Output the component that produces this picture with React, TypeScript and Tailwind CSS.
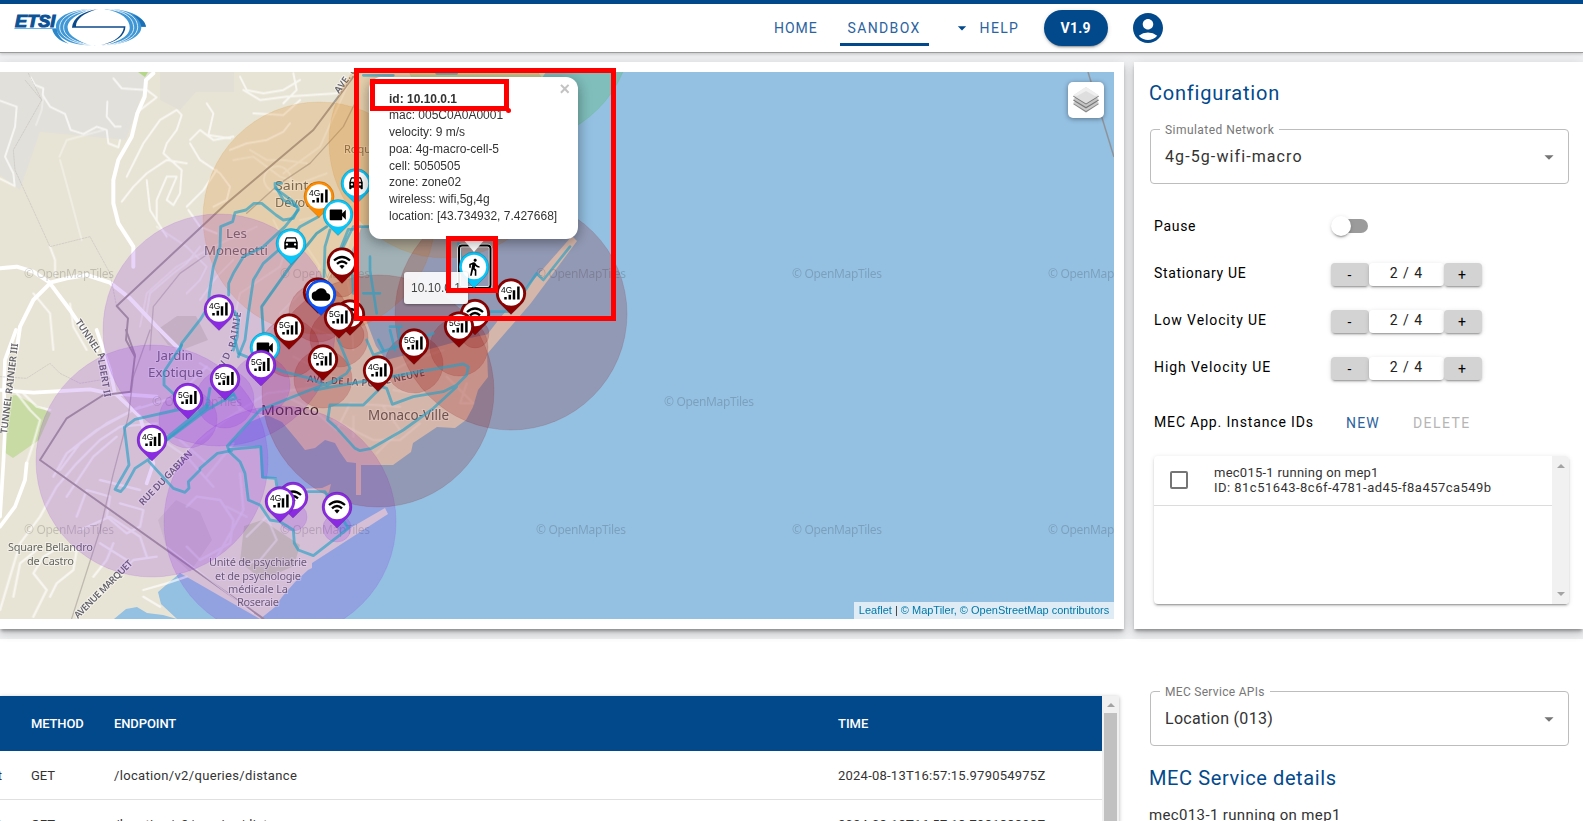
import React from "react";
import {
  MdAccountCircle,
  MdArrowDropDown,
  MdCloud,
  MdDirectionsCar,
  MdDirectionsWalk,
  MdVideocam,
  MdWifi,
} from "react-icons/md";

type Kind = "4G" | "5G" | "wifi" | "car" | "cam" | "cloud" | "walk" | "none";

const PURPLE = "#8a2be2";
const RED = "#8b0000";
const ORANGE = "#ff8c00";
const ORANGE_AREA = "#d87a0c";
const CYAN = "#0cc5f7";
const BLUE = "#0a50f5";

const cells: [number, number, number, string][] = [
  [516, 27, 116, "#2fb923"],
  [445, 142, 116, ORANGE_AREA],
  [319, 218, 116, ORANGE_AREA],
  [219, 330, 116, PURPLE],
  [152, 461, 116, PURPLE],
  [280, 522, 116, PURPLE],
  [378, 391, 116, RED],
  [511, 314, 116, RED],
  [188, 419, 29, PURPLE],
  [225, 399, 29, PURPLE],
  [261, 385, 29, PURPLE],
  [290, 348, 29, RED],
  [323, 379, 29, RED],
  [339, 338, 29, RED],
  [414, 364, 29, RED],
  [459, 347, 29, RED],
  [318, 313, 29, RED],
  [342, 283, 14, RED],
  [350, 335, 14, RED],
  [475, 334, 14, RED],
  [293, 517, 14, PURPLE],
  [337, 528, 14, PURPLE],
];

const pins: [number, number, Kind, string][] = [
  [356, 204.5, "car", CYAN],
  [319, 217.5, "4G", ORANGE],
  [338, 235.5, "cam", CYAN],
  [342, 283.5, "wifi", RED],
  [291, 264.5, "car", CYAN],
  [318, 313.5, "none", RED],
  [321, 315.5, "cloud", BLUE],
  [219, 330.5, "4G", PURPLE],
  [511, 314.5, "4G", RED],
  [475, 335, "wifi", RED],
  [350, 335.5, "wifi", RED],
  [339, 338.5, "5G", RED],
  [459, 347.5, "5G", RED],
  [289, 349.5, "5G", RED],
  [414, 364.5, "5G", RED],
  [265, 368.5, "cam", CYAN],
  [323, 380.5, "5G", RED],
  [261, 386, "5G", PURPLE],
  [378, 391.5, "4G", RED],
  [225, 400, "5G", PURPLE],
  [188, 419, "5G", PURPLE],
  [152, 461, "4G", PURPLE],
  [293, 518, "wifi", PURPLE],
  [280, 522.5, "4G", PURPLE],
  [337, 528, "wifi", PURPLE],
];

const watermarks: [number, number][] = [
  [24, 277.5], [280, 277.5], [536, 277.5], [792, 277.5], [1048, 277.5],
  [152, 405.5], [664, 405.5],
  [24, 533.5], [280, 533.5], [536, 533.5], [792, 533.5], [1048, 533.5],
];

function Pin({ x, y, kind, color }: { x: number; y: number; kind: Kind; color: string }) {
  const cy = y - 21;
  return (
    <g>
      <path
        d={`M${x} ${y}L${x - 10.6} ${cy + 10.6}A15 15 0 1 1 ${x + 10.6} ${cy + 10.6}Z`}
        fill={color}
        stroke="#000"
        strokeOpacity={0.3}
        strokeWidth={0.6}
      />
      <circle cx={x} cy={cy} r={12.2} fill="#fff" />
      {(kind === "4G" || kind === "5G") && (
        <g>
          <text x={x - 10} y={cy - 0.5} fontSize={8.4} fontFamily="Liberation Sans, sans-serif" fill="#000">{kind}</text>
          <path d={`M${x - 5.5} ${cy + 6}v-2.4M${x - 1.2} ${cy + 6}v-4.8M${x + 3} ${cy + 6}v-9.2M${x + 7.4} ${cy + 6}v-13`} stroke="#000" strokeWidth={2.5} />
        </g>
      )}
      {kind === "wifi" && (
        <g fill="none" stroke="#000" strokeWidth={2.3}>
          <path d={`M${x - 8} ${cy - 2}Q${x} ${cy - 9} ${x + 8} ${cy - 2}M${x - 5} ${cy + 1.4}Q${x} ${cy - 3.4} ${x + 5} ${cy + 1.4}`} />
          <path d={`M${x - 2.6} ${cy + 3.6}Q${x} ${cy + 1.6} ${x + 2.6} ${cy + 3.6}L${x} ${cy + 6.6}Z`} fill="#000" stroke="none" />
        </g>
      )}
      {kind === "car" && <MdDirectionsCar x={x - 9} y={cy - 10} size={18} color="#000" />}
      {kind === "cam" && <MdVideocam x={x - 11} y={cy - 10.5} size={21.5} color="#000" />}
      {kind === "cloud" && <MdCloud x={x - 9.5} y={cy - 9.5} size={19} color="#000" />}
      {kind === "walk" && <MdDirectionsWalk x={x - 9.5} y={cy - 9.5} size={19} color="#000" />}
    </g>
  );
}

function MapCanvas() {
  return (
    <svg viewBox="0 72 1114 547" className="block h-[547px] w-[1114px]" fontFamily="Noto Sans, sans-serif">
      <rect x={0} y={72} width={1114} height={547} fill="#94c0e2" />
      <path d="M1088 72L1114 157" stroke="#8f9399" strokeWidth={1.5} />
      <path
        fill="#e8e4d5"
        d="M0 72H546L520 110L500 170L470 215L460 236L400 222L362 226L352 250L357 294L366 320L376 346L386 360L430 349L470 338L489 334L480 344L500 318L572 236L577 241L531 303L487 354L488 377L478 390L473 407L466 420L455 428L437 427L413 443L411 452L393 465L361 465V495H356V463L347 462L340 452L335 443L325 440L315 448L305 450L297 440L282 422L267 415L250 422L239 435L230 443L229 447L260 446L261 478L277 478L278 490L322 488L331 484L329 492L325 496L340 534L385 508L388 514L312 563L312 568L308 570L295 582L282 597L275 607L260 619L180 573L158 592L161 604L177 619L163 615L147 613L137 607L126 609L114 619H0Z"
      />
      <path d="M0 72H150L126 140L40 132L20 190L0 175Z" fill="#e2e0da" />
      <path d="M160 72H234V92H196L180 110L160 100Z" fill="#dfddd6" opacity={0.7} />
      <path d="M10 396L16 395L51 413L39 440L13 458L4 452Z" fill="#c9dba4" />
      <path d="M138 72L148 72L145 77Z" fill="#b5d78a" />
      <path d="M157 330L177 316L196 316L208 340L182 350L168 345Z" fill="#d2d0bf" />
      <path d="M244 526L262 520L300 545L294 566L262 580L240 562Z" fill="#cdd1b2" />
      <path d="M158 520L176 500L200 512L212 540L190 572L168 552Z" fill="#dbd6c8" />

      <g transform="translate(0 60) scale(.33333)" fill="none" stroke="#fff" strokeLinecap="round" strokeLinejoin="round">
        <g strokeWidth={12}>
          <path d="M460 40L438 60L434 110L412 160L395 230L355 300L340 360V430L355 490L400 560L400 620" />
          <path d="M0 625L50 620L100 635L150 668L200 655L260 645L330 668L390 715L470 800L540 870" />
          <path d="M150 670L100 720L60 800L50 870M150 670L210 750L250 810L290 870" />
        </g>
        <g strokeWidth={6} opacity={0.7}>
          <path d="M0 122L50 140L45 200L15 290L40 340L44 378L0 356" />
          <path d="M92 52L105 75L130 85L128 105L150 140L195 162L212 210L250 222L290 200L320 210L325 250L355 262L360 240" />
          <path d="M340 55L365 85L440 90L470 112L420 150M322 125L320 170L345 200L362 200" />
          <path d="M108 195L125 150L130 105M178 290L200 240L310 210M180 300L210 410L245 540" opacity={0.5} />
          <path d="M380 350L400 310L430 250L480 180L530 150L545 165L530 210L500 250L490 280L545 330L540 400L520 435L500 420L530 350L500 350L470 420L470 480" />
          <path d="M365 425L400 380L440 340L500 300L560 310M440 360L450 450L500 530M570 240L600 210L640 240L700 230M570 250L600 300L660 340L690 380L680 420L640 440" />
          <path d="M560 440L610 390L650 330M565 450L600 500L650 520M620 130L640 160L625 225L690 235M720 50L740 90L790 100L850 90L900 60" />
          <path d="M730 90L780 120L860 110L1010 100M690 270L740 250L800 240L850 215L870 190M760 160L850 165L900 120M880 40L890 90L850 130" />
          <path d="M700 300L760 290L840 350L900 370L980 340M750 270L800 300L850 300L920 310M860 330A40 38 0 1 0 862 332M1050 60L1000 170L960 260L850 340" opacity={0.6} />
          <path d="M150 560L165 600L165 650M100 700L150 760L160 870M210 730L220 800L260 870" />
          <path d="M470 500L560 560L620 620L600 660L560 700M600 560L560 610L520 640L450 700L440 760M700 600L650 650L600 720" opacity={0.6} />
          <path d="M820 480L860 560L840 620L720 700L700 790M900 480L1000 460L1060 430M920 560L960 620L920 680L840 760M420 800L440 700L530 620L640 560L770 500" opacity={0.5} />
          <path d="M1060 500L1030 600L1050 700L1060 870M760 860L820 800L900 790L1000 830" opacity={0.5} />
        </g>
        <g strokeWidth={1.5} stroke="#bdb9b9" strokeDasharray="5 4">
          <path d="M85 40L125 120L40 270L45 330L150 560L270 530L330 640L350 740M125 120L75 60" />
        </g>
        <g stroke="#a49c96" strokeWidth={6}>
          <path d="M1060 50L1000 130L940 210L680 430L350 738L384 775L378 840L405 890" />
          <path d="M1075 110L1030 200L930 310L840 370L740 460" strokeWidth={4} opacity={0.7} />
          <path d="M640 570L540 640L460 740L450 870" strokeWidth={4} opacity={0.5} />
        </g>
      </g>

      <g transform="translate(0 330) scale(.33333)" fill="none" stroke="#fff" strokeLinecap="round" strokeLinejoin="round">
        <g strokeWidth={11}>
          <path d="M48 0L15 90L12 180L15 300L10 400L0 560M0 180L100 188L270 178L330 190L470 200" />
          <path d="M290 0L330 120L345 190L420 260L460 400L440 460M80 400L75 450L45 530L0 590" />
        </g>
        <g strokeWidth={7} opacity={0.65}>
          <path d="M50 190L90 240L120 270L100 340L80 400M70 190L110 230L150 240M0 840L30 740L60 640L120 560L170 470L230 400L300 330L360 290L470 280" />
          <path d="M160 440L200 370L290 300L400 240L530 200L620 110M180 420L240 340L320 280L420 230M200 500L280 380L350 320M240 600L330 560L420 620L440 680" />
          <path d="M230 560L260 480L330 500L320 560L380 610L420 590L430 540L360 520M300 450L420 480M100 860L140 780L100 730L130 680L180 650L230 660L220 720L170 760L150 800" />
          <path d="M40 800L60 700L110 660M280 740L320 690L340 640M300 640L380 690M430 780L500 760L560 740M430 800L480 830M230 860L300 790L400 690L470 680" />
          <path d="M560 530L590 500L660 510L700 570L690 640L600 690L560 650M600 100L680 150L720 240M720 430L730 540L640 700M740 620L800 560L830 630L780 690L740 700M500 340L560 380L640 470M540 330L620 400" opacity={0.7} />
          <path d="M600 330L690 260L800 190L960 170M700 340L620 440M680 530L740 560M860 200L940 240L1010 300L1050 220L1200 230M1000 270L1120 330L1200 330L1260 280" opacity={0.6} />
          <path d="M880 80L1000 140L1060 160M1160 130L1240 90L1330 60M1180 180L1240 190M1340 140L1420 220L1380 220L1400 160M1060 260L1060 320M1150 230L1200 300L1130 370" opacity={0.5} />
        </g>
        <path d="M0 140L80 145L150 100L180 130L240 160L330 145" stroke="#bdb9b9" strokeWidth={1.5} strokeDasharray="5 4" />
        <g stroke="#a49c96" strokeWidth={6}>
          <path d="M378 0L405 75L392 185L310 195L200 265L120 390L790 866" />
          <path d="M450 0L400 140L385 260L340 430L300 600L215 866" strokeWidth={4} opacity={0.6} />
        </g>
        <path d="M500 650L760 850" strokeWidth={4} opacity={0.6} />
      </g>

      <g fontSize={12} fill="#000" fillOpacity={0.17}>
        {watermarks.map(([x, y]) => (
          <text key={`${x}-${y}`} x={x} y={y} textLength={90}>© OpenMapTiles</text>
        ))}
      </g>

      <g fill="#66665f" stroke="#fff" strokeOpacity={0.45} strokeWidth={2} paintOrder="stroke" fontSize={13}>
        <text x={275} y={190} textLength={46} lengthAdjust="spacingAndGlyphs">Sainte-</text>
        <text x={275} y={206.5} textLength={42} lengthAdjust="spacingAndGlyphs">Dévote</text>
        <text x={226} y={237.5} textLength={21} lengthAdjust="spacingAndGlyphs">Les</text>
        <text x={204} y={254.5} textLength={64} lengthAdjust="spacingAndGlyphs">Monegetti</text>
        <text x={344} y={152.5} fontSize={11}>Roqueville</text>
        <text x={157} y={360} textLength={36} lengthAdjust="spacingAndGlyphs">Jardin</text>
        <text x={148} y={376.5} textLength={55} lengthAdjust="spacingAndGlyphs">Exotique</text>
        <text x={261} y={415} fontSize={15} textLength={58} lengthAdjust="spacingAndGlyphs" fill="#33332f">Monaco</text>
        <text x={368} y={420} fontSize={13.5} textLength={81} lengthAdjust="spacingAndGlyphs">Monaco-Ville</text>
        <g fontSize={11}>
          <text x={8} y={551} textLength={85}>Square Bellandro</text>
          <text x={27} y={564.5} textLength={47}>de Castro</text>
          <text x={209} y={566} textLength={98}>Unité de psychiatrie</text>
          <text x={215} y={579.5} textLength={86}>et de psychologie</text>
          <text x={228} y={593} textLength={60}>médicale La</text>
          <text x={237} y={606} textLength={42}>Roseraie</text>
        </g>
        <g fontSize={9.5} fontWeight={600} fill="#66636b">
          <text transform="translate(7 434) rotate(-83)" textLength={91}>TUNNEL RAINIER III</text>
          <text transform="translate(75 322) rotate(56)" textLength={46}>TUNNEL A</text>
          <text transform="translate(98 360) rotate(80)" textLength={38}>LBERT II</text>
          <text transform="translate(143 506) rotate(-46)" textLength={72}>RUE DU GABIAN</text>
          <text transform="translate(78 619) rotate(-45)" textLength={78}>AVENUE MARQUET</text>
          <text transform="translate(225 368) rotate(-68)" textLength={20}>VD.</text>
          <text transform="translate(235 348) rotate(-80)" textLength={36}>RAINIE</text>
          <text transform="translate(339 94) rotate(-54)" textLength={36}>AVE. DE</text>
          <text transform="translate(307 382) rotate(4)" textLength={68}>AVE. DE LA PO</text>
          <text transform="translate(386 384) rotate(-12)" textLength={40}>E NEUVE</text>
        </g>
      </g>

      {cells.map(([x, y, r, c], i) => (
        <circle key={i} cx={x} cy={y} r={r} fill={c} fillOpacity={0.2} stroke={c} strokeOpacity={0.12} strokeWidth={1} />
      ))}

      <g fill="none" stroke="#2a9fc4" strokeOpacity={0.66} strokeLinejoin="round" strokeLinecap="round">
        <g transform="translate(0 60) scale(.33333)" strokeWidth={8.5}>
          <path d="M845 370H825L826 385L880 425L895 445L880 475L850 480L828 465L785 430H762L738 450L705 458L698 485L662 500L660 560L640 620L628 700L625 740L600 780L545 850L540 870" />
          <path d="M895 450L855 500L790 560L730 590L700 640L686 670V705M955 470L900 500L870 540L790 610L760 660L745 760L735 840L715 890M830 385L850 420L890 440" />
          <path d="M980 500L950 520L870 620L785 740L790 820" stroke="#1594b8" />
          <path d="M990 510L975 560L972 650M1060 508H1045L1020 570M705 755L715 780L712 830L700 870" />
        </g>
        <g transform="translate(330 60) scale(.33333)" strokeWidth={8}>
          <path d="M120 500H70L40 560M120 590V630L140 760M100 700H150M64 600L70 700M180 810L195 870M180 800H215M205 800L210 850M145 840L160 870M385 550L400 620M480 755H540M720 560L640 660L620 640L580 700M100 46H190M320 40H380" />
        </g>
        <g transform="translate(200 340) scale(.33333)" strokeWidth={8.5}>
          <path d="M105 0L115 40L250 95L330 115L380 137L440 100L450 85L415 0M500 0L520 45L700 -20M180 210L82 318L88 335L120 365L135 400L145 480L180 495L210 540L240 545L280 570L283 610L295 630L340 647L445 565L375 455H325M180 210L330 150L420 115" />
          <path d="M88 328L182 320L188 412L227 415L232 450M95 332L52 340L0 385" />
          <path d="M345 150L400 140L790 72L805 80L800 105L770 135L730 155L640 170L577 193L560 145L545 140L490 195H390L383 240L408 262L465 325L480 332L515 325L610 270L700 205L770 140" />
          <path d="M75 180L100 160L108 175L90 180" />
        </g>
        <g transform="translate(0 330) scale(.33333)" strokeWidth={8.5}>
          <path d="M545 45L492 125V165L530 200M580 232L530 240L405 268L373 292L387 405L345 478L362 485L375 470L405 415L450 385" />
          <path d="M700 195L620 240L560 285L500 330M630 175L620 235M447 395L520 475L555 487L567 475L565 455L600 420" />
        </g>
        <path d="M207 406L165 440" strokeWidth={4.5} />
      </g>

      {pins.map(([x, y, kind, color], i) => (
        <Pin key={i} x={x} y={y} kind={kind} color={color} />
      ))}
      <rect x={459} y={245.5} width={31.5} height={42.5} rx={3} fill="none" stroke="#fff" strokeWidth={3.4} />
      <rect x={459} y={245.5} width={31.5} height={42.5} rx={3} fill="none" stroke="#000" strokeWidth={2} />
      <Pin x={474} y={288} kind="walk" color={CYAN} />
    </svg>
  );
}

function EtsiLogo() {
  return (
    <svg viewBox="42 24 400 118" className="h-[39px] w-[133px]" fill="none">
      <g fill="#3f97d6">
        <path d="M295 27C210 25 163 52 168 84C172 116 214 140 288 137C236 128 204 108 203 84C202 58 238 36 295 27Z" />
        <path d="M314 27C390 25 438 52 440 81H426C428 112 372 139 302 137C362 128 390 108 391 84C392 58 366 36 314 27Z" />
      </g>
      <path d="M156 86H170C172 106 186 122 206 132C178 124 160 108 156 86Z" fill="#2c86c8" />
      <g stroke="#fff" strokeWidth={2.5}>
        <path d="M285 27C212 30 178 54 179 84C180 112 220 133 282 138" />
        <path d="M290 27C224 34 190 56 191 84C192 110 226 130 284 138" />
        <path d="M320 27C382 34 402 56 403 84C402 110 370 130 312 138" />
        <path d="M326 27C392 32 414 54 415 82C414 112 376 132 316 138" />
      </g>
      <path d="M292 28C246 36 216 54 213 84C212 106 240 128 284 137C250 124 224 104 224 88H370C366 110 346 126 302 137C352 128 378 108 378 79H230C234 58 252 40 292 28Z" fill="#fff" stroke="#fff" strokeWidth={5} />
      <path d="M292 28C248 36 220 52 216 84H373C368 108 350 126 302 137C350 127 378 108 378 79H228C230 56 252 40 292 28Z" fill="#0b4a8a" />
      <path d="M426 81C424 66 414 54 398 44C424 52 438 66 440 81Z" fill="#1c6fb5" />
      <text x={44} y={80} fontFamily="Liberation Sans, Arial, sans-serif" fontSize={48} fontWeight={700} fontStyle="italic" fill="#0b5296" stroke="#0b5296" strokeWidth={3} textLength={122} lengthAdjust="spacingAndGlyphs">ETSI</text>
      <path d="M42 86H168" stroke="#6db2e2" strokeWidth={3} />
    </svg>
  );
}

function LayersIcon() {
  return (
    <svg viewBox="0 0 26 26" className="h-[26px] w-[26px]">
      <path d="M0 17L13 9L26 17L13 25.5Z" fill="#8a8a8a" />
      <path d="M0 16L13 8L26 16L13 24Z" fill="#c9c9c9" />
      <path d="M0 13.5L13 5L26 13.5L13 21.5Z" fill="#777" />
      <path d="M0 12.2L13 4L26 12.2L13 20Z" fill="#c4c4c4" />
      <path d="M0 9.5L13 1L26 9.5L13 17.6Z" fill="#777" />
      <path d="M0 8.6L13 0L26 8.6L13 16.4Z" fill="#dedede" />
      <path d="M0 8.6L13 0L26 8.6L22 9L13 4L4 9Z" fill="#efefef" />
    </svg>
  );
}

function OutlinedSelect({ label, value, labelClass, valueClass }: { label: string; value: string; labelClass: string; valueClass: string }) {
  return (
    <div className="relative flex h-[55px] w-[419px] items-center justify-between rounded border border-[#bdbdbd] pr-[8px] pl-[14px]">
      <span className={`absolute -top-[7px] left-[9px] bg-white px-[5px] text-[12px] leading-[14px] whitespace-nowrap text-[#777] ${labelClass}`}>{label}</span>
      <span className={`text-[16px] leading-5 whitespace-nowrap text-[#333] ${valueClass}`}>{value}</span>
      <MdArrowDropDown className="h-[22px] w-[22px] text-[#757575]" />
    </div>
  );
}

const raised = "shadow-[0_3px_1px_-2px_rgba(0,0,0,.2),0_2px_2px_0_rgba(0,0,0,.14),0_1px_5px_0_rgba(0,0,0,.12)]";

function Stepper({ label, className }: { label: string; className: string }) {
  return (
    <div className="flex h-[47px] items-start">
      <span className={`w-[177px] text-[14px] leading-[20px] whitespace-nowrap text-black ${className}`}>{label}</span>
      <div className="flex h-[23px] text-[14px] text-black">
        <span className={`flex w-[38px] items-center justify-center rounded bg-[#d3d3d3] pt-[2px] pr-px ${raised}`}>-</span>
        <span className={`flex w-[75px] items-center justify-center rounded bg-white pb-[2px] tracking-[1px] text-[#222] ${raised}`}>2 / 4</span>
        <span className={`flex w-[38px] items-center justify-center rounded bg-[#d3d3d3] pt-[1px] pr-[2px] ${raised}`}>+</span>
      </div>
    </div>
  );
}

const cardShadow = "shadow-[0_3px_3px_-1px_rgba(0,0,0,.3),0_5px_8px_0_rgba(0,0,0,.14),0_1px_14px_0_rgba(0,0,0,.08)]";

export default function App() {
  return (
    <div className="h-[821px] w-[1583px] overflow-hidden bg-white font-[Roboto,sans-serif] text-[#333]">
      <header className="relative z-10 flex h-[53px] items-start border-t-4 border-b border-t-[#02498c] border-b-[#9b9b9b] bg-white shadow-[0_1px_3px_rgba(0,0,0,.2)]">
        <div className="w-[760px] pt-[4px] pl-[14px]">
          <EtsiLogo />
        </div>
        <nav className="flex h-[48px] items-start text-[14px] leading-[18px] text-[#2a639f]">
          <span className="ml-[14px] pt-[15px] tracking-[0.95px]">HOME</span>
          <span className="ml-[22px] flex h-[42px] w-[89px] justify-center border-b-3 border-[#02498c] pt-[15px] tracking-[1.35px]">SANDBOX</span>
          <MdArrowDropDown className="mt-[14px] ml-[23px] h-5 w-5 text-[#02498c]" />
          <span className="ml-[8px] w-[40px] pt-[15px] tracking-[1.3px]">HELP</span>
          <span className={`mt-[6px] ml-[24px] flex h-9 w-16 items-center justify-center rounded-full bg-[#02498c] text-[14px] font-bold tracking-[0.2px] text-white ${raised}`}>V1.9</span>
          <MdAccountCircle className="mt-[6px] ml-[22px] h-9 w-9 text-[#02498c]" />
        </nav>
      </header>

      <main className="flex h-[586px] gap-[10px] bg-[#eff0f2] pt-[9px]">
        <section className={`h-[567px] w-[1124px] bg-white pt-[10px] ${cardShadow}`}>
          <div className="relative h-[547px] w-[1114px]">
            <MapCanvas />
            <div className="absolute top-[10px] left-[1068px] flex h-9 w-9 items-center justify-center rounded-[5px] bg-white shadow-[0_1px_5px_rgba(0,0,0,.4)]">
              <LayersIcon />
            </div>
            <div className="absolute right-0 bottom-0 flex h-[17px] w-[260px] items-center justify-center bg-white/70 font-[Liberation_Sans,sans-serif] text-[11px] whitespace-nowrap text-[#0078a8]">
              <span>Leaflet <span className="text-[#333]">|</span> © MapTiler, © OpenStreetMap contributors</span>
            </div>
            <div className="absolute top-[200px] left-[404px] flex h-[32px] w-[64px] items-center rounded-[3px] bg-white/90 pl-[7px] font-[Liberation_Sans,sans-serif] text-[12px] text-[#444] shadow-[0_1px_3px_rgba(0,0,0,.4)]">10.10.0.1</div>
            <svg viewBox="0 0 24 14" className="absolute top-[166px] left-[462px] h-[14px] w-[24px]">
              <path d="M0 0H24L12 14Z" fill="#fff" />
            </svg>
            <div className="absolute top-[5px] left-[369px] h-[162px] w-[209px] rounded-xl bg-white pt-[13.5px] pl-[20px] font-[Liberation_Sans,sans-serif] text-[12px] leading-[16.8px] whitespace-nowrap text-[#333] shadow-[0_3px_14px_rgba(0,0,0,.4)]">
              <p className="font-bold">id: 10.10.0.1</p>
              <p>mac: 005C0A0A0001</p>
              <p>velocity: 9 m/s</p>
              <p>poa: 4g-macro-cell-5</p>
              <p>cell: 5050505</p>
              <p>zone: zone02</p>
              <p>wireless: wifi,5g,4g</p>
              <p>location: [43.734932, 7.427668]</p>
              <span className="absolute top-[4px] right-[8px] text-[18px] font-bold text-[#c3c3c3]">×</span>
            </div>
            <div className="absolute -top-[4px] left-[354px] h-[253px] w-[262px] border-[5px] border-[#ff0000]" />
            <div className="absolute top-[7px] left-[370px] h-[32px] w-[139px] border-[5px] border-[#ff0000]" />
            <div className="absolute top-[36px] left-[506px] h-[5px] w-[5px] rounded-full bg-[#ff0000]" />
            <div className="absolute top-[164px] left-[446px] h-[57px] w-[52px] border-[5px] border-[#ff0000]" />
          </div>
        </section>

        <section className={`h-[567px] w-[449px] shrink-0 bg-white pt-[19px] pl-[16px] ${cardShadow}`}>
          <h2 className="-ml-px text-[20px] leading-6 tracking-[0.8px] text-[#02498c]">Configuration</h2>
          <div className="pt-[24px]">
            <OutlinedSelect label="Simulated Network" value="4g-5g-wifi-macro" labelClass="tracking-[0.45px]" valueClass="tracking-[1.1px]" />
          </div>
          <div className="pt-[31px] pl-[4px]">
            <div className="flex h-[48px] items-start">
              <span className="w-[177px] pt-[1px] text-[14px] leading-[20px] tracking-[0.7px] text-black">Pause</span>
              <div className="relative mt-[4px] h-[15px] w-[37px]">
                <div className="ml-[4px] h-[14px] w-[33px] rounded-full bg-[#9b9b9b]" />
                <div className={`absolute -top-[3px] left-0 h-5 w-5 rounded-full bg-white ${raised}`} />
              </div>
            </div>
            <Stepper label="Stationary UE" className="tracking-[0.65px]" />
            <Stepper label="Low Velocity UE" className="tracking-[0.9px]" />
            <Stepper label="High Velocity UE" className="tracking-[0.92px]" />
            <div className="flex h-[52px] items-start pt-[8px] text-[14px] leading-[20px] whitespace-nowrap">
              <span className="w-[192px] tracking-[0.85px] text-black">MEC App. Instance IDs</span>
              <span className="w-[67px] pt-px tracking-[1.2px] text-[#2a639f]">NEW</span>
              <span className="pt-px tracking-[1.4px] text-[#b5b5b5]">DELETE</span>
            </div>
            <div className={`flex h-[148px] w-[415px] overflow-hidden rounded bg-white ${raised}`}>
              <div className="flex-1">
                <div className="flex h-[50px] items-center border-b border-[#dcdcdc] pb-px pl-[16px]">
                  <span className="h-[18px] w-[18px] rounded-[2px] border-2 border-[#757575]" />
                  <div className="pb-px pl-[26px] text-[13px] leading-[15px] whitespace-nowrap text-[#333]">
                    <p className="tracking-[0.25px]">mec015-1 running on mep1</p>
                    <p className="tracking-[0.47px]">ID: 81c51643-8c6f-4781-ad45-f8a457ca549b</p>
                  </div>
                </div>
              </div>
              <div className="flex w-[17px] flex-col items-center justify-between bg-[#f1f1f1] py-[8px]">
                <span className="border-x-4 border-b-4 border-x-transparent border-b-[#a3a3a3]" />
                <span className="border-x-4 border-t-4 border-x-transparent border-t-[#a3a3a3]" />
              </div>
            </div>
          </div>
        </section>
      </main>

      <div className="flex pt-[52px]">
        <div className="mt-[5px] flex h-[130px] w-[1119px] overflow-hidden shadow-[0_1px_4px_rgba(0,0,0,.3)]">
          <div className="w-[1102px] text-[13px] whitespace-nowrap text-[#333]">
            <div className="flex h-[55px] items-center bg-[#02498c] pt-px pl-[31px] font-medium text-white">
              <span className="w-[83px] tracking-[-0.15px]">METHOD</span>
              <span className="w-[724px] tracking-[-0.1px]">ENDPOINT</span>
              <span>TIME</span>
            </div>
            {["2024-08-13T16:57:15.979054975Z", "2024-08-13T16:57:13.798133898Z"].map((time) => (
              <div key={time} className="relative flex h-[49px] items-center border-b border-[#e0e0e0] pt-px pl-[31px]">
                <span className="absolute right-full -mr-[2px]">text</span>
                <span className="w-[83px]">GET</span>
                <span className="w-[724px] tracking-[0.33px]">/location/v2/queries/distance</span>
                <span className="tracking-[0.23px]">{time}</span>
              </div>
            ))}
          </div>
          <div className="flex w-[17px] flex-col items-center bg-[#f1f1f1] pt-[7px]">
            <span className="border-x-4 border-b-4 border-x-transparent border-b-[#a3a3a3]" />
            <span className="mt-[6px] w-[13px] flex-1 bg-[#c1c1c1]" />
          </div>
        </div>
        <div className="ml-[31px]">
          <OutlinedSelect label="MEC Service APIs" value="Location (013)" labelClass="tracking-[0.3px]" valueClass="tracking-[0.3px]" />
          <h2 className="-ml-px pt-[20px] text-[20px] leading-6 tracking-[0.6px] text-[#02498c]">MEC Service details</h2>
          <p className="-ml-px pt-[15px] text-[15px] leading-5 tracking-[0.36px] whitespace-nowrap">mec013-1 running on mep1</p>
        </div>
      </div>
    </div>
  );
}
